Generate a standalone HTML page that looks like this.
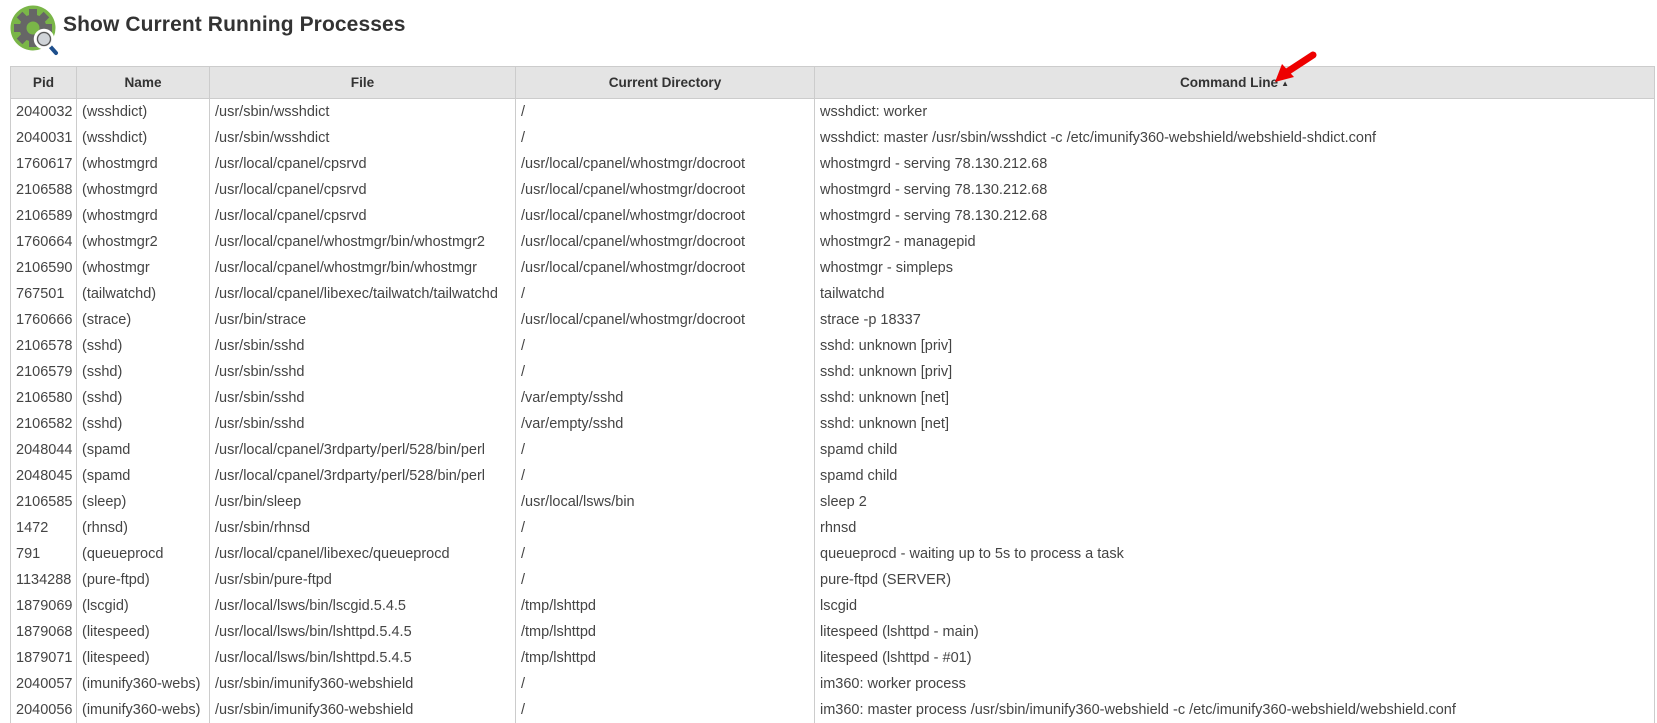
<!DOCTYPE html>
<html><head><meta charset="utf-8"><style>
body{margin:0;background:#fff;font-family:"Liberation Sans",sans-serif;color:#333;width:1657px;height:720px;overflow:hidden;position:relative}
h1{position:absolute;left:63px;top:13px;margin:0;font-size:21px;font-weight:bold;color:#333;letter-spacing:0.1px}
svg.ic{position:absolute;left:9px;top:5px}
table{position:absolute;left:10px;top:66px;border-collapse:collapse;font-size:14.5px;width:1645px;table-layout:fixed}
th{background:#e4e4e4;height:31px;border:1px solid #ccc;font-weight:bold;text-align:center;padding:0;font-size:13.6px;color:#333}
td{height:26px;padding:0 0 0 5px;border-left:1px solid #ccc;border-right:1px solid #ccc;white-space:nowrap;overflow:hidden;color:#444}
.tri{font-size:8px;vertical-align:middle;margin-left:3px}
</style></head><body>
<svg class="ic" width="52" height="52" viewBox="0 0 52 52">
<circle cx="24" cy="23" r="22.5" fill="#7ab648"/>
<g fill="#666" transform="translate(24,23)">
<circle r="13.5"/>
<g id="t"><rect x="-4" y="-19" width="8" height="9"/></g>
<use href="#t" transform="rotate(45)"/><use href="#t" transform="rotate(90)"/><use href="#t" transform="rotate(135)"/><use href="#t" transform="rotate(180)"/><use href="#t" transform="rotate(225)"/><use href="#t" transform="rotate(270)"/><use href="#t" transform="rotate(315)"/>
</g>
<circle cx="24" cy="23" r="6.5" fill="#7ab648"/>
<line x1="39" y1="39" x2="47" y2="48" stroke="#1e4f8c" stroke-width="4" stroke-linecap="round"/>
<circle cx="35" cy="34" r="9" fill="#e8e8e8" stroke="#fff" stroke-width="2.5"/>
<circle cx="35" cy="34" r="6.5" fill="#d0d4d8" stroke="#555" stroke-width="1.3"/>
</svg>
<h1>Show Current Running Processes</h1>
<table>
<colgroup><col style="width:66px"><col style="width:133px"><col style="width:306px"><col style="width:299px"><col></colgroup>
<tr><th>Pid</th><th>Name</th><th>File</th><th>Current Directory</th><th>Command Line<span class="tri">▲</span></th></tr>
<tr><td>2040032</td><td>(wsshdict)</td><td>/usr/sbin/wsshdict</td><td>/</td><td>wsshdict: worker</td></tr>
<tr><td>2040031</td><td>(wsshdict)</td><td>/usr/sbin/wsshdict</td><td>/</td><td>wsshdict: master /usr/sbin/wsshdict -c /etc/imunify360-webshield/webshield-shdict.conf</td></tr>
<tr><td>1760617</td><td>(whostmgrd</td><td>/usr/local/cpanel/cpsrvd</td><td>/usr/local/cpanel/whostmgr/docroot</td><td>whostmgrd - serving 78.130.212.68</td></tr>
<tr><td>2106588</td><td>(whostmgrd</td><td>/usr/local/cpanel/cpsrvd</td><td>/usr/local/cpanel/whostmgr/docroot</td><td>whostmgrd - serving 78.130.212.68</td></tr>
<tr><td>2106589</td><td>(whostmgrd</td><td>/usr/local/cpanel/cpsrvd</td><td>/usr/local/cpanel/whostmgr/docroot</td><td>whostmgrd - serving 78.130.212.68</td></tr>
<tr><td>1760664</td><td>(whostmgr2</td><td>/usr/local/cpanel/whostmgr/bin/whostmgr2</td><td>/usr/local/cpanel/whostmgr/docroot</td><td>whostmgr2 - managepid</td></tr>
<tr><td>2106590</td><td>(whostmgr</td><td>/usr/local/cpanel/whostmgr/bin/whostmgr</td><td>/usr/local/cpanel/whostmgr/docroot</td><td>whostmgr - simpleps</td></tr>
<tr><td>767501</td><td>(tailwatchd)</td><td>/usr/local/cpanel/libexec/tailwatch/tailwatchd</td><td>/</td><td>tailwatchd</td></tr>
<tr><td>1760666</td><td>(strace)</td><td>/usr/bin/strace</td><td>/usr/local/cpanel/whostmgr/docroot</td><td>strace -p 18337</td></tr>
<tr><td>2106578</td><td>(sshd)</td><td>/usr/sbin/sshd</td><td>/</td><td>sshd: unknown [priv]</td></tr>
<tr><td>2106579</td><td>(sshd)</td><td>/usr/sbin/sshd</td><td>/</td><td>sshd: unknown [priv]</td></tr>
<tr><td>2106580</td><td>(sshd)</td><td>/usr/sbin/sshd</td><td>/var/empty/sshd</td><td>sshd: unknown [net]</td></tr>
<tr><td>2106582</td><td>(sshd)</td><td>/usr/sbin/sshd</td><td>/var/empty/sshd</td><td>sshd: unknown [net]</td></tr>
<tr><td>2048044</td><td>(spamd</td><td>/usr/local/cpanel/3rdparty/perl/528/bin/perl</td><td>/</td><td>spamd child</td></tr>
<tr><td>2048045</td><td>(spamd</td><td>/usr/local/cpanel/3rdparty/perl/528/bin/perl</td><td>/</td><td>spamd child</td></tr>
<tr><td>2106585</td><td>(sleep)</td><td>/usr/bin/sleep</td><td>/usr/local/lsws/bin</td><td>sleep 2</td></tr>
<tr><td>1472</td><td>(rhnsd)</td><td>/usr/sbin/rhnsd</td><td>/</td><td>rhnsd</td></tr>
<tr><td>791</td><td>(queueprocd</td><td>/usr/local/cpanel/libexec/queueprocd</td><td>/</td><td>queueprocd - waiting up to 5s to process a task</td></tr>
<tr><td>1134288</td><td>(pure-ftpd)</td><td>/usr/sbin/pure-ftpd</td><td>/</td><td>pure-ftpd (SERVER)</td></tr>
<tr><td>1879069</td><td>(lscgid)</td><td>/usr/local/lsws/bin/lscgid.5.4.5</td><td>/tmp/lshttpd</td><td>lscgid</td></tr>
<tr><td>1879068</td><td>(litespeed)</td><td>/usr/local/lsws/bin/lshttpd.5.4.5</td><td>/tmp/lshttpd</td><td>litespeed (lshttpd - main)</td></tr>
<tr><td>1879071</td><td>(litespeed)</td><td>/usr/local/lsws/bin/lshttpd.5.4.5</td><td>/tmp/lshttpd</td><td>litespeed (lshttpd - #01)</td></tr>
<tr><td>2040057</td><td>(imunify360-webs)</td><td>/usr/sbin/imunify360-webshield</td><td>/</td><td>im360: worker process</td></tr>
<tr><td>2040056</td><td>(imunify360-webs)</td><td>/usr/sbin/imunify360-webshield</td><td>/</td><td>im360: master process /usr/sbin/imunify360-webshield -c /etc/imunify360-webshield/webshield.conf</td></tr>
</table>
<svg style="position:absolute;left:1270px;top:46px;z-index:5" width="52" height="42" viewBox="0 0 52 42"><path d="M43 9 L17 26" stroke="#e00" stroke-width="7" stroke-linecap="round"/><path d="M5 36 L12 18 L24 31 Z" fill="#e00"/></svg>
</body></html>
